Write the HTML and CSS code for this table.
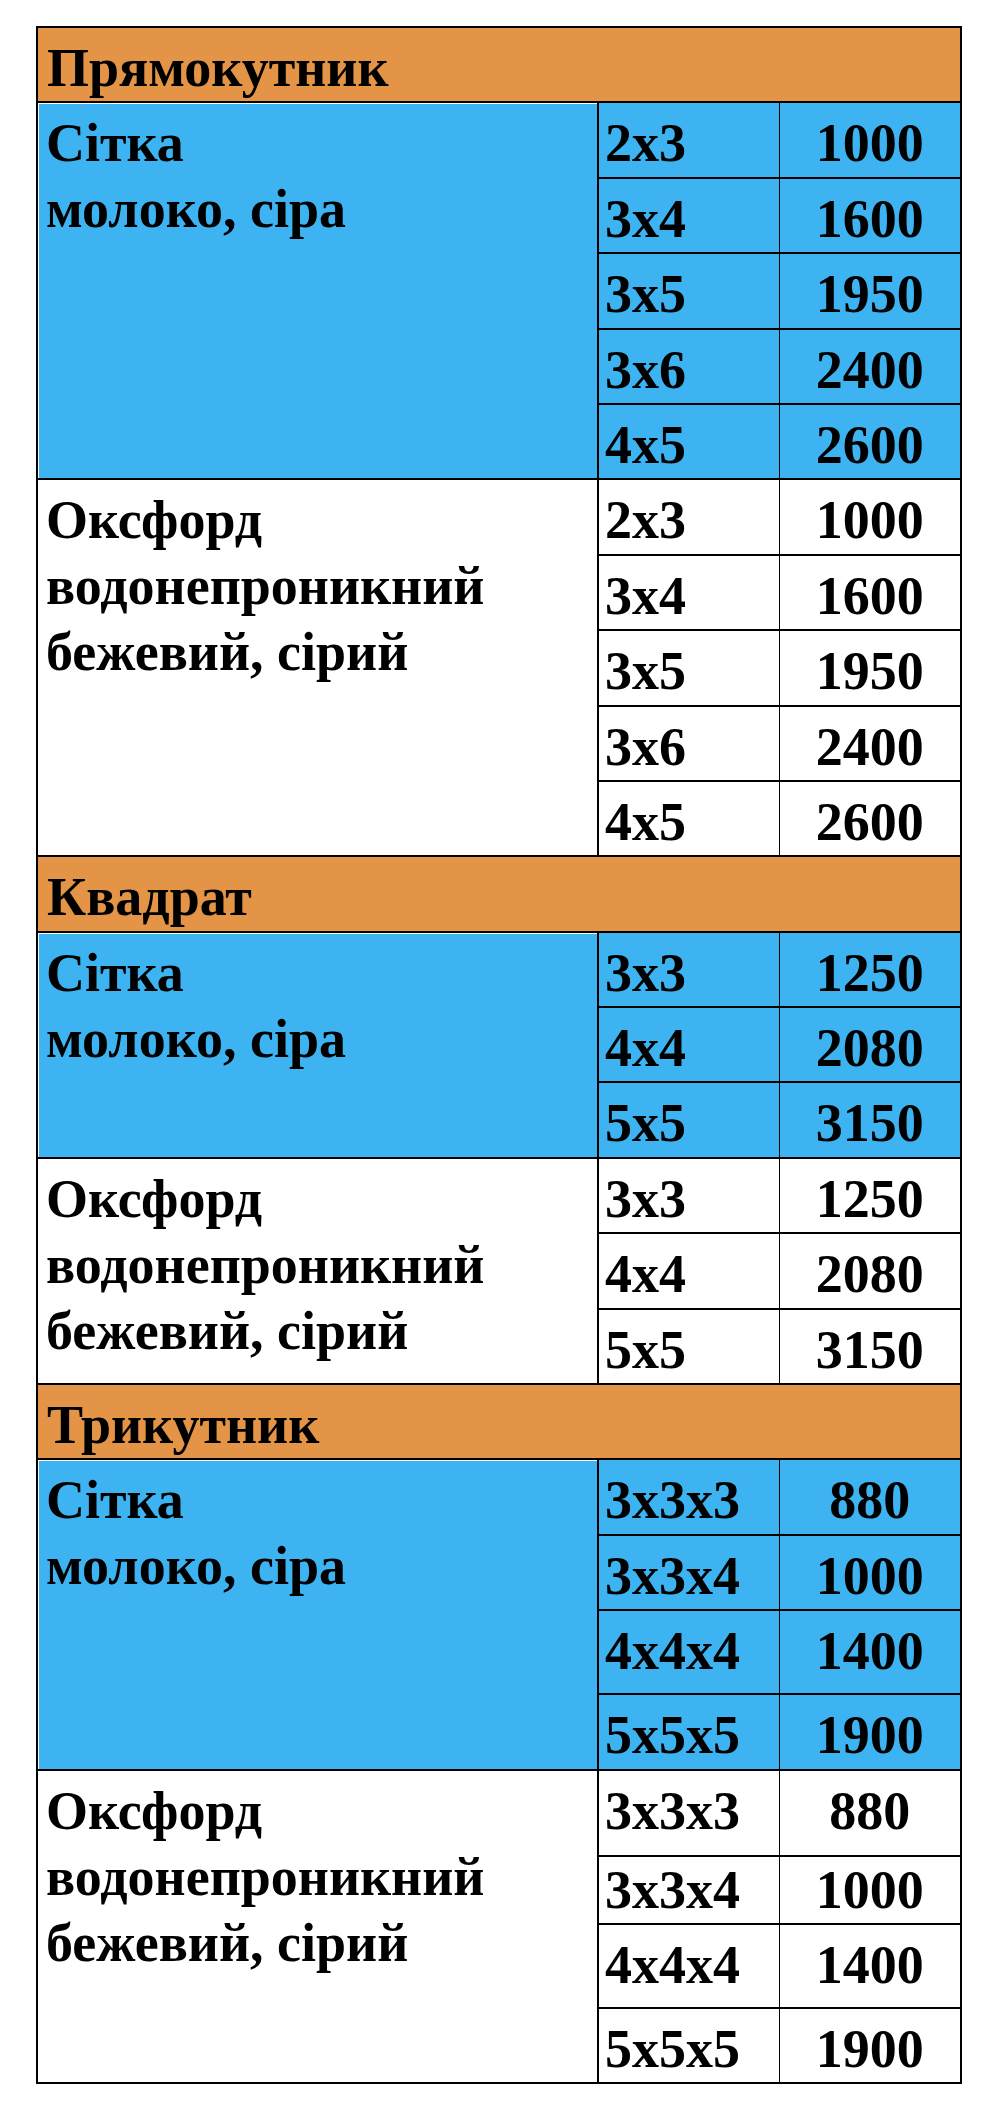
FILE: index.html
```html
<!DOCTYPE html>
<html lang="uk">
<head>
<meta charset="utf-8">
<title>Ціни</title>
<link rel="stylesheet" href="styles.css">
</head>
<body>
<div class="page">
<table class="prices">
  <colgroup>
    <col class="c-name">
    <col class="c-size">
    <col class="c-price">
  </colgroup>
  <tbody>
    <tr class="head"><td colspan="3">Прямокутник</td></tr>
    <tr class="blue"><td class="name" rowspan="5">Сітка<br>молоко, сіра</td><td class="size">2x3</td><td class="price">1000</td></tr>
    <tr class="blue"><td class="size">3x4</td><td class="price">1600</td></tr>
    <tr class="blue"><td class="size">3x5</td><td class="price">1950</td></tr>
    <tr class="blue"><td class="size">3x6</td><td class="price">2400</td></tr>
    <tr class="blue"><td class="size">4x5</td><td class="price">2600</td></tr>
    <tr><td class="name" rowspan="5">Оксфорд<br>водонепроникний<br>бежевий, сірий</td><td class="size">2x3</td><td class="price">1000</td></tr>
    <tr><td class="size">3x4</td><td class="price">1600</td></tr>
    <tr><td class="size">3x5</td><td class="price">1950</td></tr>
    <tr><td class="size">3x6</td><td class="price">2400</td></tr>
    <tr><td class="size">4x5</td><td class="price">2600</td></tr>

    <tr class="head"><td colspan="3">Квадрат</td></tr>
    <tr class="blue"><td class="name" rowspan="3">Сітка<br>молоко, сіра</td><td class="size">3x3</td><td class="price">1250</td></tr>
    <tr class="blue"><td class="size">4x4</td><td class="price">2080</td></tr>
    <tr class="blue"><td class="size">5x5</td><td class="price">3150</td></tr>
    <tr><td class="name" rowspan="3">Оксфорд<br>водонепроникний<br>бежевий, сірий</td><td class="size">3x3</td><td class="price">1250</td></tr>
    <tr><td class="size">4x4</td><td class="price">2080</td></tr>
    <tr><td class="size">5x5</td><td class="price">3150</td></tr>

    <tr class="head"><td colspan="3">Трикутник</td></tr>
    <tr class="blue"><td class="name" rowspan="4">Сітка<br>молоко, сіра</td><td class="size">3x3x3</td><td class="price">880</td></tr>
    <tr class="blue"><td class="size">3x3x4</td><td class="price">1000</td></tr>
    <tr class="blue tall"><td class="size">4x4x4</td><td class="price">1400</td></tr>
    <tr class="blue"><td class="size">5x5x5</td><td class="price">1900</td></tr>
    <tr class="taller"><td class="name" rowspan="4">Оксфорд<br>водонепроникний<br>бежевий, сірий</td><td class="size">3x3x3</td><td class="price">880</td></tr>
    <tr class="short"><td class="size">3x3x4</td><td class="price">1000</td></tr>
    <tr class="tall"><td class="size">4x4x4</td><td class="price">1400</td></tr>
    <tr><td class="size">5x5x5</td><td class="price">1900</td></tr>
  </tbody>
</table>
</div>
</body>
</html>
```

FILE: styles.css
```css
html, body {
  margin: 0;
  padding: 0;
  background: #ffffff;
}

.page {
  padding: 26px 0 0 36px;
}

.prices {
  border-collapse: collapse;
  table-layout: fixed;
  width: 924px;
  border: 2px solid #000;
  font-family: "Liberation Serif", "Times New Roman", serif;
  font-weight: bold;
  font-size: 54px;
  line-height: 66px;
  color: #000;
}

.c-name { width: 561px; }
.c-size { width: 181px; }
.c-price { width: 182px; }

.prices tr {
  height: 75.4px;
}

.prices tr.tall { height: 84px; }
.prices tr.taller { height: 86px; }
.prices tr.short { height: 66px; }

.prices td {
  vertical-align: top;
  padding: 7px 0 0 0;
  border-top: 2px solid #000;
  border-bottom: 2px solid #000;
  white-space: nowrap;
  overflow: hidden;
}

.head td {
  background: #e39447;
  padding-left: 9px;
}

.blue td {
  background: #3db4f1;
}

.name {
  padding-left: 8px !important;
  border-right: 2px solid #000;
  box-shadow: inset 1px 1px 0 #ffffff;
}

.size {
  padding-left: 6px !important;
  border-right: 1px solid #000;
}

.price {
  text-align: center;
}

.short td {
  padding-top: 0;
}
```
